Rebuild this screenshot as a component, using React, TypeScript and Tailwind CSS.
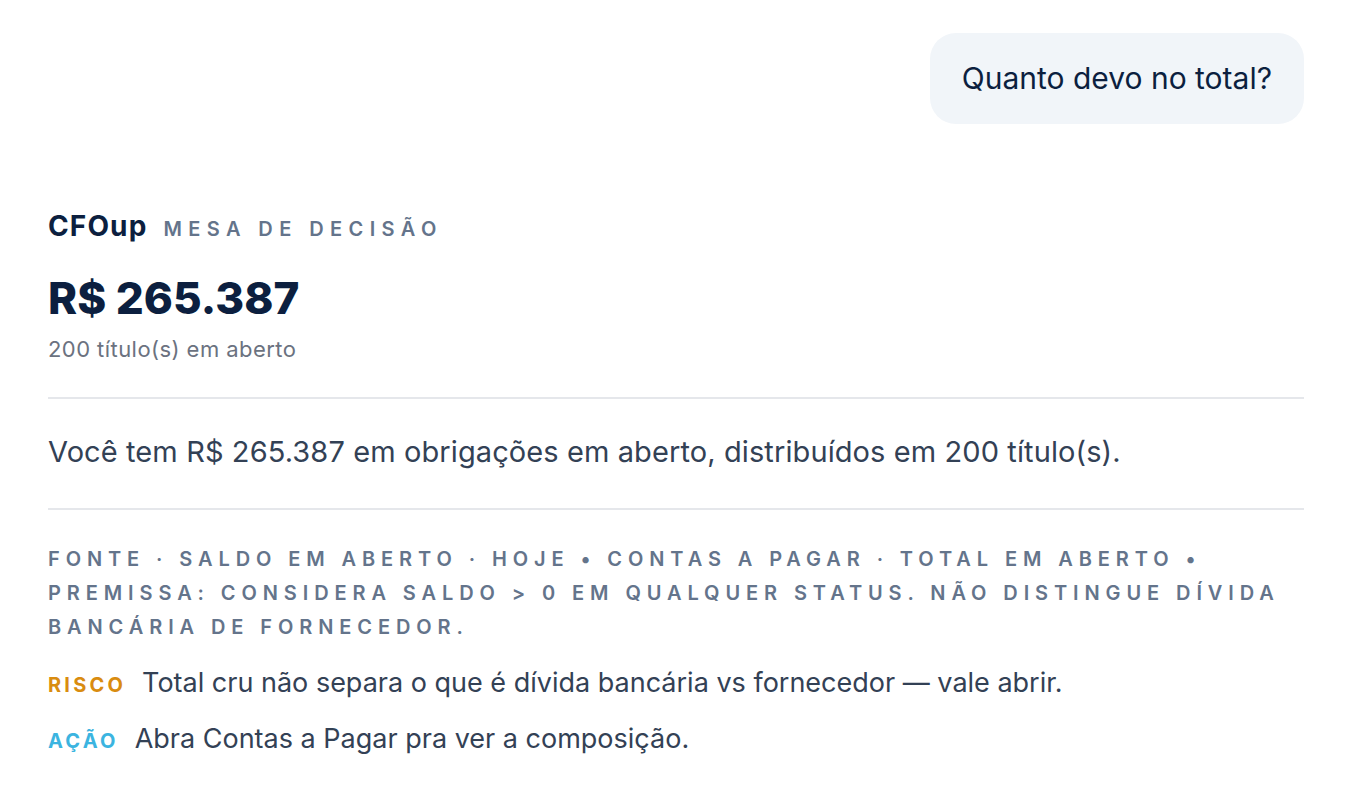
export default function App() {
  return (
    <div
      className="min-h-screen bg-white px-12 text-[#0c1f3f]"
      style={{ fontFamily: 'Inter, "Noto Sans", sans-serif' }}
    >
      {/* User question */}
      <div className="flex justify-end pt-[33px]">
        <div className="rounded-[26px] bg-[#f1f5f9] px-8 py-6 text-[30px] leading-[43px] text-[#0c1f3f]">
          Quanto devo no total?
        </div>
      </div>

      {/* Header */}
      <div className="mt-[86px] flex items-baseline gap-4 leading-[32px]">
        <span className="text-[28px] font-bold tracking-[0.04em]">CFOup</span>
        <span className="text-[20px] font-semibold uppercase tracking-[0.32em] text-[#64748b]">
          Mesa de decisão
        </span>
      </div>

      <div className="mt-[29px] text-[44px] font-extrabold leading-[48px]">R$ 265.387</div>
      <div className="mt-[13px] text-[22px] leading-[28px] tracking-[0.02em] text-[#6b7280]">
        200 título(s) em aberto
      </div>

      <div className="mt-[34px] h-[2px] bg-[#e5e7eb]" />

      <p className="mt-[35px] text-[29px] leading-[36px] tracking-[0.1px] text-[#334155]">
        Você tem R$ 265.387 em obrigações em aberto, distribuídos em 200 título(s).
      </p>

      <div className="mt-[38px] h-[2px] bg-[#e5e7eb]" />

      {/* Source / premises */}
      <p className="mt-[32px] text-[20px] font-semibold uppercase leading-[34px] tracking-[0.295em] text-[#64748b]">
        Fonte · Saldo em aberto · Hoje • Contas a Pagar · Total em aberto •
        <br />
        Premissa: considera saldo &gt; 0 em qualquer status. Não distingue dívida
        <br />
        bancária de fornecedor.
      </p>

      <div className="mt-[21px] flex items-baseline gap-4 leading-[36px]">
        <span className="text-[20px] font-bold uppercase tracking-[0.16em] text-[#d98c10]">Risco</span>
        <span className="text-[27px] text-[#334155]">
          Total cru não separa o que é dívida bancária vs fornecedor — vale abrir.
        </span>
      </div>

      <div className="mt-[18px] flex items-baseline gap-4 leading-[36px]">
        <span className="text-[20px] font-bold uppercase tracking-[0.16em] text-[#3bb4e0]">Ação</span>
        <span className="text-[27px] text-[#334155]">Abra Contas a Pagar pra ver a composição.</span>
      </div>
    </div>
  );
}
